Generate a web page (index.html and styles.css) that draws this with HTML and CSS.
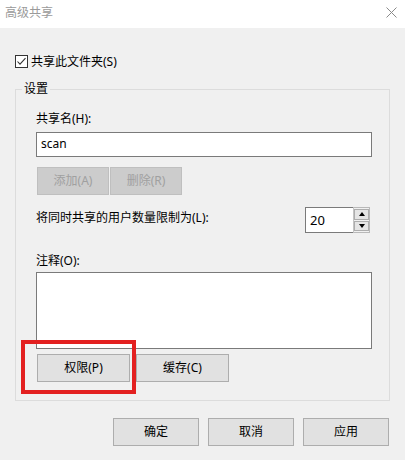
FILE: index.html
```html
<!DOCTYPE html>
<html lang="zh-CN">
<head>
<meta charset="utf-8">
<title>高级共享</title>
<link rel="stylesheet" href="styles.css">
</head>
<body>
<div class="dialog">
  <div class="titlebar">
    <span class="title">高级共享</span>
    <svg class="close" width="11" height="11" viewBox="0 0 11 11"><path d="M0.5 0.5L10.5 10.5M10.5 0.5L0.5 10.5" stroke="#8a8a8a" stroke-width="1" fill="none"/></svg>
  </div>
  <div class="content">
    <div class="check-row">
      <span class="checkbox"><svg width="11" height="11" viewBox="0 0 11 11"><path d="M1.5 5.5L4 8.2L9.5 2.2" stroke="#333" stroke-width="1.1" fill="none"/></svg></span>
      <span class="check-label">共享此文件夹(S)</span>
    </div>
    <div class="group">
      <div class="group-title">设置</div>
      <div class="field-label share-label">共享名(H):</div>
      <div class="textbox">scan</div>
      <div class="btn-row small-row">
        <button class="btn small disabled">添加(A)</button>
        <button class="btn small disabled">删除(R)</button>
      </div>
      <div class="limit-row">
        <span class="limit-label">将同时共享的用户数量限制为(L):</span>
        <div class="spin">
          <div class="spin-value">20</div>
          <div class="spin-buttons">
            <div class="spin-btn"><span class="arrow-up"></span></div>
            <div class="spin-btn"><span class="arrow-down"></span></div>
          </div>
        </div>
      </div>
      <div class="field-label comment-label">注释(O):</div>
      <div class="textarea"></div>
      <div class="btn-row wide-row">
        <button class="btn wide">权限(P)</button>
        <button class="btn wide">缓存(C)</button>
      </div>
    </div>
    <div class="footer">
      <button class="btn footer-btn">确定</button>
      <button class="btn footer-btn">取消</button>
      <button class="btn footer-btn">应用</button>
    </div>
  </div>
  <div class="highlight"></div>
</div>
</body>
</html>
```
FILE: styles.css
```css
* { box-sizing: border-box; }
html, body {
  margin: 0;
  padding: 0;
  background: #f0f0f0;
}
body {
  font-family: "Noto Sans", "Noto Sans CJK SC", sans-serif;
  font-size: 12px;
  line-height: 16px;
  color: #000;
}
.dialog {
  position: relative;
  width: 405px;
  height: 460px;
  background: #f0f0f0;
  overflow: hidden;
}
.titlebar {
  height: 28px;
  background: #fff;
  display: flex;
  align-items: center;
  justify-content: space-between;
  padding: 0 8px 0 5px;
}
.title {
  color: #9a9a9a;
  font-size: 12px;
  line-height: 16px;
  margin-top: -3px;
}
.close {
  display: block;
  margin-top: -4px;
}
.content {
  padding: 0 0 0 15px;
}
.check-row {
  display: flex;
  align-items: flex-start;
  margin-top: 26px;
  height: 16px;
}
.checkbox {
  width: 13px;
  height: 13px;
  border: 1px solid #333;
  background: #fff;
  margin-top: 1px;
  margin-right: 3px;
  display: flex;
}
.checkbox svg { display: block; }
.group {
  margin-top: 19px;
  width: 375px;
  border: 1px solid #dcdcdc;
  padding: 0 17px 18px 20px;
}
.group-title {
  width: fit-content;
  margin: -9px 0 0 -14px;
  padding: 0 2px;
  background: #f0f0f0;
}
.share-label { margin-top: 14px; }
.textbox {
  margin-top: 5px;
  height: 25px;
  border: 1px solid #7a7a7a;
  background: #fff;
  padding: 0 0 0 4px;
  line-height: 22px;
  font-size: 12px;
}
.btn {
  font-family: "Noto Sans", "Noto Sans CJK SC", sans-serif;
  font-size: 12px;
  line-height: 16px;
  color: #000;
  background: #e1e1e1;
  border: 1px solid #adadad;
  height: 28px;
  padding: 0;
  margin: 0;
}
.btn-row {
  display: flex;
  padding-left: 1px;
}
.small-row {
  margin-top: 10px;
  gap: 1px;
}
.small {
  width: 72px;
}
.disabled {
  background: #cccccc;
  border-color: #bfbfbf;
  color: #a0a0a0;
}
.limit-row {
  margin-top: 12px;
  display: flex;
  justify-content: space-between;
  align-items: flex-start;
}
.limit-label {
  padding-top: 3px;
}
.spin {
  display: flex;
  height: 26px;
  margin-right: 2px;
}
.spin-value {
  width: 48px;
  border: 1px solid #7a7a7a;
  border-right: none;
  background: #fff;
  padding-left: 4px;
  line-height: 24px;
  font-size: 13px;
}
.spin-buttons {
  width: 17px;
  border: 1px solid #b8b8b8;
  border-left: 1px solid #c4c4c4;
  background: #f0f0f0;
  padding: 1px 0 1px 0;
  display: flex;
  flex-direction: column;
  gap: 1px;
}
.spin-btn {
  flex: 1;
  background: #e5e5e5;
  border: 1px solid #adadad;
  display: flex;
  align-items: center;
  justify-content: center;
}
.arrow-up {
  width: 0;
  height: 0;
  border-left: 3.5px solid transparent;
  border-right: 3.5px solid transparent;
  border-bottom: 4px solid #000;
}
.arrow-down {
  width: 0;
  height: 0;
  border-left: 3.5px solid transparent;
  border-right: 3.5px solid transparent;
  border-top: 4px solid #000;
}
.comment-label { margin-top: 20px; }
.textarea {
  margin-top: 3px;
  height: 77px;
  border: 1px solid #7a7a7a;
  background: #fff;
}
.wide-row {
  margin-top: 5px;
  gap: 6px;
}
.wide {
  width: 93px;
}
.footer {
  margin-top: 17px;
  display: flex;
  justify-content: flex-end;
  gap: 9px;
  padding-right: 16px;
}
.footer-btn {
  width: 86px;
}
.highlight {
  position: absolute;
  left: 21px;
  top: 340px;
  width: 115px;
  height: 54px;
  border: 4px solid #e32020;
}
```
